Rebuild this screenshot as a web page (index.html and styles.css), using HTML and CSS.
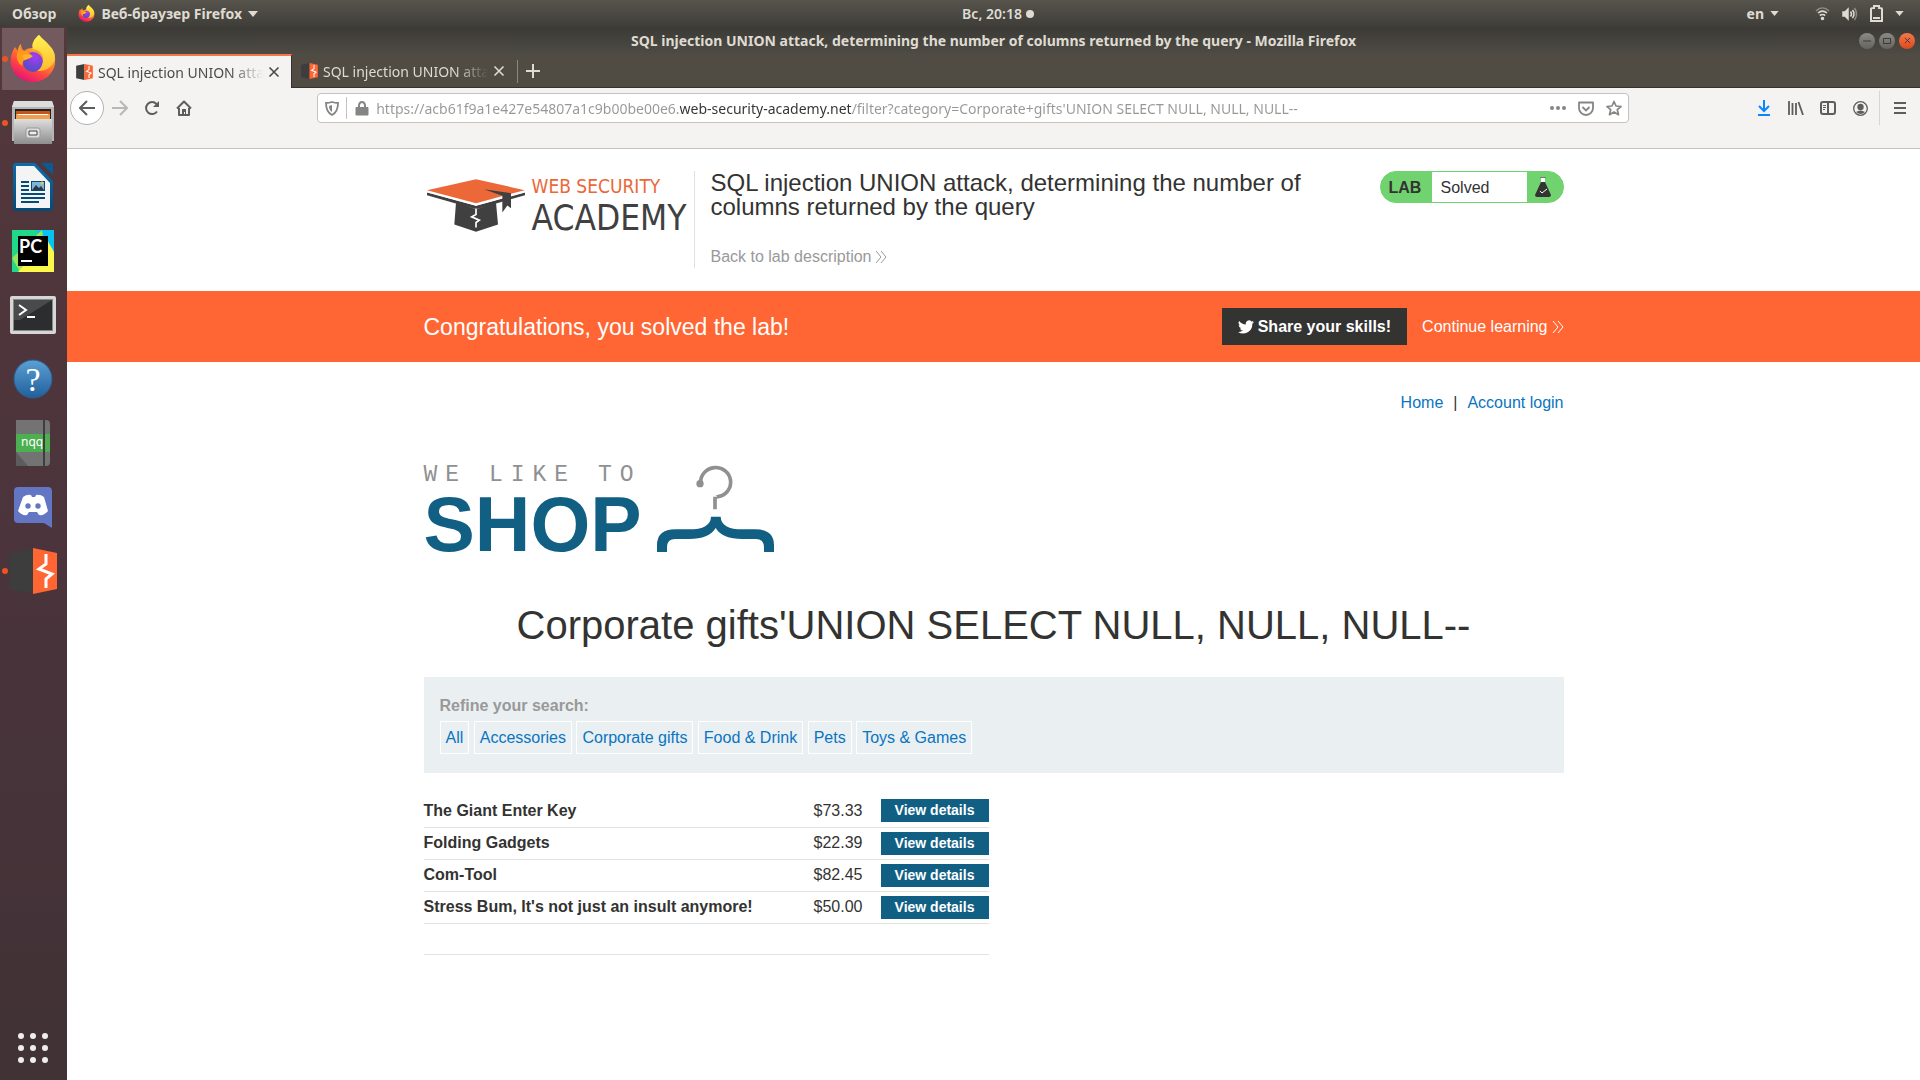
FILE: index.html
```html
<!DOCTYPE html>
<html lang="en">
<head>
<meta charset="utf-8">
<title>SQL injection UNION attack, determining the number of columns returned by the query</title>
<link rel="stylesheet" href="styles.css">
</head>
<body>
<svg class="defs" aria-hidden="true">
  <defs>
    <linearGradient id="fire" x1="0.8" y1="0" x2="0.3" y2="1"><stop offset="0" stop-color="#fff44f"/><stop offset=".35" stop-color="#ffa42b"/><stop offset=".7" stop-color="#ff4a3e"/><stop offset="1" stop-color="#e4107c"/></linearGradient>
    <radialGradient id="globe" cx=".6" cy=".25" r=".8"><stop offset="0" stop-color="#a63bf0"/><stop offset="1" stop-color="#4a4fc4"/></radialGradient>
    <linearGradient id="tail" x1=".5" y1="0" x2=".5" y2="1"><stop offset="0" stop-color="#fff44f"/><stop offset="1" stop-color="#ffb930"/></linearGradient>
    <linearGradient id="steel" x1="0" y1="0" x2="0" y2="1"><stop offset="0" stop-color="#dedede"/><stop offset="1" stop-color="#8e8e8e"/></linearGradient>
    <linearGradient id="blue" x1="0" y1="0" x2="0" y2="1"><stop offset="0" stop-color="#5ba0d4"/><stop offset="1" stop-color="#215f9c"/></linearGradient>
    <linearGradient id="writer" x1="0" y1="0" x2="0" y2="1"><stop offset="0" stop-color="#0b6cab"/><stop offset="1" stop-color="#064a78"/></linearGradient>
    <symbol id="firefox" viewBox="0 0 46 48">
      <path d="M11 9c-2 2-3 4-3 7l-3-4C1 18 0 24 1 30c2 10 11 17 22 17s21-8 22-19c1-8-2-14-6-17-3-4-7-7-10-11-5 4-7 9-6 13-4 0-7 1-9 3-2-2-3-4-3-7z" fill="url(#fire)"/>
      <circle cx="23" cy="27" r="10" fill="url(#globe)"/>
      <path d="M29 0c-5 4-8 9-6 14 9 1 12 8 9 16-1 3-3 5-5 6 10 1 17-6 18-13 0-6-3-10-6-13-3-4-7-6-10-10z" fill="url(#tail)"/>
      <path d="M11 9c-1 3-1 5 0 7 4-1 8 1 11 5-1 3-5 3-7 4-3 1-2 4-3 6-4-3-7-8-4-15 0-3 1-5 3-7z" fill="#ff9a1f"/>
      <path d="M12 21c3-2 7-2 11 0-2 2-6 2-8 4z" fill="#ffb52b"/>
    </symbol>
    <symbol id="burp" viewBox="0 0 48 46">
      <path d="M0 5 24 0v46L0 41z" fill="#3d3d3d"/><path d="M24 0 48 5v36L24 46z" fill="#ff6633"/>
      <path d="M37 6v10l-7 5 13 5-6 5v9" fill="none" stroke="#fff" stroke-width="3"/>
    </symbol>
    <symbol id="chevrons" viewBox="0 0 12 14"><path d="M1 1l5 6-5 6M6 1l5 6-5 6" fill="none" stroke="currentColor"/></symbol>
    <symbol id="cross" viewBox="0 0 12 12"><path d="M1.500 1.500l9 9m0-9-9 9" stroke="currentColor" stroke-width="1.600"/></symbol>
    <symbol id="caret" viewBox="0 0 10 6"><path d="M0 0h10L5 6z" fill="currentColor"/></symbol>
  </defs>
</svg>

<header class="topbar">
  <div class="topbar-side">
    <button class="top-item">Обзор</button>
    <button class="top-item"><svg width="17" height="17"><use href="#firefox"/></svg>Веб-браузер Firefox<svg width="10" height="6"><use href="#caret"/></svg></button>
  </div>
  <button class="top-item clock">Вс, 20:18<span class="dot"></span></button>
  <div class="topbar-side topbar-right">
    <button class="top-item lang">en<svg width="9" height="5"><use href="#caret"/></svg></button>
    <button class="top-item status" aria-label="System menu">
      <svg width="15" height="15" viewBox="0 0 15 15" fill="none" stroke="currentColor" stroke-width="1.600"><path d="M1 5c4-4 9-4 13 0" opacity=".45"/><path d="M3 7c3-2.500 6-2.500 9 0M4.800 9.500c2-1.500 3.400-1.500 5.400 0"/><circle cx="7.500" cy="12.500" r="1" fill="currentColor"/></svg>
      <svg width="16" height="14" viewBox="0 0 16 14" fill="none" stroke="currentColor" stroke-width="1.500"><path d="M1 5h2l3-3v10L3 9H1z" fill="currentColor"/><path d="M8.500 4.500q2 2.500 0 5M10.500 3q3 4 0 8"/><path d="M12.500 1q4 6 0 12" opacity=".45"/></svg>
      <svg width="13" height="17" viewBox="0 0 13 17" fill="none" stroke="currentColor" stroke-width="2"><path d="M1 4q0-1 2-1h1V1h5v2h1q2 0 2 1v12H1zM3 13h7"/></svg>
      <svg width="9" height="5"><use href="#caret"/></svg>
    </button>
  </div>
</header>

<div class="desktop">
  <nav class="dock" aria-label="Applications">
    <button class="app active running" aria-label="Firefox"><svg width="46" height="48"><use href="#firefox"/></svg></button>
    <button class="app running" aria-label="Files"><svg width="42" height="44" viewBox="0 0 42 44"><path d="M2 0h38l2 6v34H0V6z" fill="#b5b5b5"/><path d="M2 0h38l2 6H0z" fill="#dcdcdc"/><path d="M3 8h36v14H3z" fill="#222"/><path d="M4 10h34v7H4z" fill="#c4541d"/><path d="M4 13h34v7H4z" fill="#f0a04a"/><path d="M6 13h30v1H6z" fill="#fff"/><path d="M2 18h38v25H2z" fill="url(#steel)"/><rect x="14" y="27" width="14" height="10" rx="2" fill="#ddd" stroke="#999"/><path d="M17 30h8v4h-8z" fill="#eee" stroke="#444"/></svg></button>
    <button class="app" aria-label="LibreOffice Writer"><svg width="40" height="48" viewBox="0 0 40 48"><path d="M2 0h20l18 18v28l-2 2H2l-2-2V2z" fill="url(#writer)"/><path d="M28 0h12v12z" fill="#0b5a93"/><path d="M3 3h18l16 17v25H3z" fill="#f4f4f4"/><path d="M8 19h8m-8 4h8m-8 4h8m-8 4h24M8 35h24M8 39h18" stroke="#064a78" stroke-width="2"/><path d="M18 18h14v10H18z" fill="#064a78"/><path d="M19 19h12v8H19z" fill="#7cb5dc"/><path d="m19 27 4-5 3 3 2-2 3 4z" fill="#2d3840"/><circle cx="29" cy="20" r="1.500" fill="#e9c84a"/></svg></button>
    <button class="app" aria-label="PyCharm"><svg width="42" height="42" viewBox="0 0 42 42"><path d="M0 0h42v42H0z" fill="#21d789"/><path d="M24 0h18v26z" fill="#07c3f2"/><path d="M0 28 30 0l6 42H8z" fill="#9be25d"/><path d="m34 8 8 14v20H6z" fill="#fcf84a"/><path d="M6 6h30v30H6z" fill="#000"/><path d="M9 31h11" stroke="#fff" stroke-width="2"/><text x="7" y="23" class="pc">PC</text></svg></button>
    <button class="app" aria-label="Terminal"><svg width="46" height="38" viewBox="0 0 46 38"><rect width="46" height="38" rx="2" fill="#d6d6d6"/><path d="M3 3h40v32H3z" fill="#888"/><path d="M4 4h38v30H4z" fill="#2b2d2f"/><path d="M4 4h38L10 24H4z" fill="#484a4c"/><path d="m9 9 7 5-7 5M17 21h8" fill="none" stroke="#fff" stroke-width="2"/></svg></button>
    <button class="app" aria-label="Help"><svg width="40" height="40" viewBox="0 0 40 40"><circle cx="20" cy="20" r="19" fill="url(#blue)" stroke="#2a5f93"/><text x="20" y="32" text-anchor="middle" class="help">?</text></svg></button>
    <button class="app" aria-label="NotepadQQ"><svg width="34" height="46" viewBox="0 0 34 46"><path d="M0 0h30q4 0 4 4v38q0 4-4 4H0z" fill="#737373"/><path d="m0 32 12 14H0z" fill="#5c5c5c"/><path d="M0 14h34v18H0z" fill="#4caf50"/><path d="M28 0v46" stroke="#3e3e3e" stroke-width="2"/><text x="5" y="26" class="nqq">nqq</text></svg></button>
    <button class="app" aria-label="Discord"><svg width="38" height="41" viewBox="0 0 38 41"><path d="M4 0h30q4 0 4 4v37l-8-5H4q-4 0-4-4V4q0-4 4-4z" fill="#6276c4"/><path d="M4 24 9 10q4-3 8-2l1 2h3l1-2q4-1 8 2l4 14q-4 5-9 4l-2-3h-8l-2 3q-5 1-9-4z" fill="#fff"/><circle cx="14" cy="19" r="2.700" fill="#6276c4"/><circle cx="24" cy="19" r="2.700" fill="#6276c4"/></svg></button>
    <button class="app running" aria-label="Burp Suite"><svg width="48" height="46"><use href="#burp"/></svg></button>
    <button class="app show-apps" aria-label="Show applications"><svg width="32" height="32" viewBox="0 0 32 32" fill="#eee"><circle cx="4" cy="4" r="3"/><circle cx="16" cy="4" r="3"/><circle cx="28" cy="4" r="3"/><circle cx="4" cy="16" r="3"/><circle cx="16" cy="16" r="3"/><circle cx="28" cy="16" r="3"/><circle cx="4" cy="28" r="3"/><circle cx="16" cy="28" r="3"/><circle cx="28" cy="28" r="3"/></svg></button>
  </nav>

  <div class="window">
    <div class="titlebar">
      <span class="window-title">SQL injection UNION attack, determining the number of columns returned by the query - Mozilla Firefox</span>
      <div class="window-controls">
        <button class="control" aria-label="Minimize"><svg width="8" height="8" viewBox="0 0 8 8"><path d="M0 4h8" stroke="currentColor"/></svg></button>
        <button class="control" aria-label="Maximize"><svg width="8" height="8" viewBox="0 0 8 8"><path d="M.500 1.500h7v5h-7z" fill="none" stroke="currentColor"/></svg></button>
        <button class="control close" aria-label="Close"><svg width="7" height="7"><use href="#cross"/></svg></button>
      </div>
    </div>

    <div class="tabs">
      <div class="tab selected"><svg width="17" height="16"><use href="#burp"/></svg><span class="tab-label">SQL injection UNION attack</span><button class="tab-close" aria-label="Close tab"><svg width="12" height="12"><use href="#cross"/></svg></button></div>
      <div class="tab"><svg width="17" height="16"><use href="#burp"/></svg><span class="tab-label">SQL injection UNION attack</span><button class="tab-close" aria-label="Close tab"><svg width="12" height="12"><use href="#cross"/></svg></button></div>
      <button class="new-tab" aria-label="New tab"><svg width="14" height="14" viewBox="0 0 14 14"><path d="M7 0v14M0 7h14" stroke="currentColor" stroke-width="2"/></svg></button>
    </div>

    <div class="toolbar">
      <div class="tools tools-left">
        <button class="tool back" aria-label="Back"><svg width="16" height="16" viewBox="0 0 16 16"><path d="M16 8H1m7-7L1 8l7 7" fill="none" stroke="currentColor" stroke-width="2"/></svg></button>
        <button class="tool disabled" aria-label="Forward"><svg width="16" height="16" viewBox="0 0 16 16"><path d="M0 8h15M8 1l7 7-7 7" fill="none" stroke="currentColor" stroke-width="2"/></svg></button>
        <button class="tool" aria-label="Reload"><svg width="16" height="16" viewBox="0 0 16 16"><path d="M13 11.500a6 6 0 1 1-.5-7.500" fill="none" stroke="currentColor" stroke-width="2"/><path d="M15 1v6H9z" fill="currentColor"/></svg></button>
        <button class="tool" aria-label="Home"><svg width="16" height="16" viewBox="0 0 16 16"><path d="M1 8.500 8 1.500l7 7M3 8v7h10V8" fill="none" stroke="currentColor" stroke-width="2" stroke-linejoin="round"/><path d="M6 14V9h4v5H9v-2H8v2z" fill="currentColor"/></svg></button>
      </div>
      <div class="urlbar">
        <button class="url-btn" aria-label="Tracking protection"><svg width="14" height="15" viewBox="0 0 14 15"><path d="M7 1q3 1 6 1 0 9-6 12Q1 11 1 2q3 0 6-1z" fill="none" stroke="currentColor" stroke-width="1.800"/><path d="M7 4v7q-3-2-3-6z" fill="currentColor"/></svg></button>
        <button class="url-btn lock" aria-label="Site information"><svg width="14" height="15" viewBox="0 0 14 15"><path d="M1 6.500h12V14H1z" fill="currentColor" stroke="currentColor" stroke-linejoin="round"/><path d="M4 7V4.500a3 3.500 0 0 1 6 0V7" fill="none" stroke="currentColor" stroke-width="2"/></svg></button>
        <input class="url" type="text" aria-label="Address" value="https://acb61f9a1e427e54807a1c9b00be00e6.web-security-academy.net/filter?category=Corporate+gifts'UNION SELECT NULL, NULL, NULL--">
        <button class="url-btn" aria-label="Page actions"><svg width="16" height="4" viewBox="0 0 16 4" fill="currentColor"><circle cx="2" cy="2" r="2"/><circle cx="8" cy="2" r="2"/><circle cx="14" cy="2" r="2"/></svg></button>
        <button class="url-btn" aria-label="Save to Pocket"><svg width="16" height="15" viewBox="0 0 16 15" fill="none" stroke="currentColor" stroke-width="1.800"><path d="M1 1.500h14V7a7 7 0 0 1-14 0z" stroke-linejoin="round"/><path d="m4.500 6 3.500 3.500L11.500 6"/></svg></button>
        <button class="url-btn" aria-label="Bookmark"><svg width="16" height="16" viewBox="0 0 16 16"><path d="m8 1.500 2 4.500 5 .5-3.700 3.200 1.200 5L8 12l-4.500 2.700 1.200-5L1 6.500 6 6z" fill="none" stroke="currentColor" stroke-width="1.700" stroke-linejoin="round"/></svg></button>
      </div>
      <div class="tools tools-right">
        <button class="tool download" aria-label="Downloads"><svg width="14" height="16" viewBox="0 0 14 16"><path d="M7 0v11M2 6l5 5 5-5M1 15h12" fill="none" stroke="currentColor" stroke-width="2"/></svg></button>
        <button class="tool" aria-label="Library"><svg width="16" height="14" viewBox="0 0 16 14"><path d="M1 0v14M4.500 2v12M8 2v12M10.500 1l4.500 13" stroke="currentColor" stroke-width="1.800"/></svg></button>
        <button class="tool" aria-label="Sidebars"><svg width="16" height="14" viewBox="0 0 16 14"><rect x="1" y="1" width="14" height="12" rx="2" fill="none" stroke="currentColor" stroke-width="2"/><path d="M8 1v12" stroke="currentColor" stroke-width="2"/><path d="M3 4.500h3m-3 2h3m-3 2h2" stroke="currentColor"/></svg></button>
        <button class="tool" aria-label="Account"><svg width="15" height="15" viewBox="0 0 15 15"><circle cx="7.500" cy="7.500" r="6.800" fill="none" stroke="currentColor" stroke-width="1.300"/><circle cx="7.500" cy="6" r="3.200" fill="currentColor"/><path d="M3 11q4.500-3 9 0-4.500 4-9 0z" fill="currentColor"/></svg></button>
        <button class="tool menu" aria-label="Menu"><svg width="12" height="12" viewBox="0 0 12 12"><path d="M0 1h12M0 6h12M0 11h12" stroke="currentColor" stroke-width="2"/></svg></button>
      </div>
    </div>

    <div class="page">
      <header class="container lab-header">
        <a class="logo" href="#" aria-label="Web Security Academy">
          <svg width="98" height="53" viewBox="51 88 294 158"><path d="m138 158 60 20 60-20 6 66-66 22-65-22z" fill="#404041"/><path d="m51 127 147 41 147-41v9l-147 42L51 136z" fill="#404041"/><path d="m198 160 147-39v7l-147 40L51 128v-7z" fill="#fff"/><path d="m198 88 146 33-146 39-147-39z" fill="#ec6839"/><path d="m222 118 81 12v45l-11-8-15 21v-50z" fill="#404041"/><path d="M198 176v18l-13 7 23 10-10 7v15" fill="none" stroke="#fff" stroke-width="5"/></svg>
          <span class="logo-words"><span class="logo-small">WEB SECURITY</span><span class="logo-big">ACADEMY</span></span>
        </a>
        <div class="lab-title">
          <h2>SQL injection UNION attack, determining the number of columns returned by the query</h2>
          <a class="back-link" href="#">Back to lab description <svg width="12" height="14"><use href="#chevrons"/></svg></a>
        </div>
        <div class="lab-badge"><strong>LAB</strong><span class="lab-state">Solved</span><span class="lab-flask"><svg width="16" height="20" viewBox="0 0 16 20"><path d="M5 0h6v1H5z" fill="#777"/><path d="M6 1h4v5H6z" fill="#fff"/><path d="M6 5h4l6 13q0 2-2 2H2q-2 0-2-2z" fill="#333332"/><path d="m5 14 2 2 5-4" fill="none" stroke="#fff"/></svg></span></div>
      </header>

      <section class="banner">
        <div class="container banner-row">
          <h4>Congratulations, you solved the lab!</h4>
          <button class="share"><svg width="16" height="14" viewBox="0 0 24 20" fill="#fff"><path d="M24 2.400a10 10 0 0 1-2.800.8A5 5 0 0 0 23.300.500a10 10 0 0 1-3.100 1.200 4.900 4.900 0 0 0-8.400 4.500A14 14 0 0 1 1.700 1a4.900 4.900 0 0 0 1.500 6.600A5 5 0 0 1 1 7a4.900 4.900 0 0 0 3.900 4.900 5 5 0 0 1-2.200.1 4.900 4.900 0 0 0 4.600 3.400A10 10 0 0 1 0 17.500 14 14 0 0 0 21.500 5 10 10 0 0 0 24 2.400z"/></svg>Share your skills!</button>
          <a class="continue" href="#">Continue learning <svg width="12" height="14"><use href="#chevrons"/></svg></a>
        </div>
      </section>

      <main class="container shop">
        <nav class="shop-nav"><a href="#">Home</a><span>|</span><a href="#">Account login</a></nav>
        <div class="shop-logo">
          <div class="shop-words"><span class="we-like">WE LIKE TO</span><span class="shop-big">SHOP</span></div>
          <svg width="117" height="87" viewBox="741 75 351 261"><circle cx="870" cy="131" r="11" fill="#8f9091"/><path d="M872 128a45 44 0 1 1 52 42q-9 1-9 0v38" fill="none" stroke="#8f9091" stroke-width="11"/><path d="M741 336v-20q0-48 55-48h40q66 0 67-38h29q1 38 67 38h38q55 0 55 48v20h-30v-14q0-25-25-25h-40q-60 0-80-33-20 33-80 33h-41q-25 0-25 25v14z" fill="#125f84"/></svg>
        </div>
        <h1>Corporate gifts'UNION SELECT NULL, NULL, NULL--</h1>
        <section class="filters">
          <p>Refine your search:</p>
          <div class="filter-list">
            <a href="#">All</a>
            <a href="#">Accessories</a>
            <a href="#">Corporate gifts</a>
            <a href="#">Food &amp; Drink</a>
            <a href="#">Pets</a>
            <a href="#">Toys &amp; Games</a>
          </div>
        </section>
        <table class="products">
          <tbody>
            <tr><th scope="row">The Giant Enter Key</th><td>$73.33</td><td class="action"><a href="#">View details</a></td></tr>
            <tr><th scope="row">Folding Gadgets</th><td>$22.39</td><td class="action"><a href="#">View details</a></td></tr>
            <tr><th scope="row">Com-Tool</th><td>$82.45</td><td class="action"><a href="#">View details</a></td></tr>
            <tr><th scope="row">Stress Bum, It's not just an insult anymore!</th><td>$50.00</td><td class="action"><a href="#">View details</a></td></tr>
            <tr class="empty"><th></th><td></td><td></td></tr>
          </tbody>
        </table>
      </main>
    </div>
  </div>
</div>
</body>
</html>
```

FILE: styles.css
```css
* { box-sizing: border-box; }
body {
  margin: 0;
  min-height: 100vh;
  display: flex;
  flex-direction: column;
  font-family: "Noto Sans", "Open Sans", sans-serif;
  font-size: 14px;
  color: #333332;
}
button { border: 0; padding: 0; background: none; font: inherit; color: inherit; }
svg { display: block; flex: none; }
.defs { position: absolute; width: 0; height: 0; }

/* System panel */
.topbar {
  height: 27px;
  padding: 0 16px 0 12px;
  display: flex;
  align-items: center;
  background: linear-gradient(#57544c, #3e3d38);
  color: #dfdbd2;
}
.topbar-side { flex: 1; display: flex; gap: 22px; }
.topbar-right { justify-content: flex-end; gap: 36px; }
.top-item { display: flex; align-items: center; gap: 6px; font-weight: 700; }
.clock { gap: 4px; padding-left: 80px; font-weight: 600; }
.dot { width: 8px; height: 8px; border-radius: 50%; background: #dfdbd2; }
.status { gap: 12px; }

/* Dock */
.desktop { flex: 1; display: flex; }
.dock {
  width: 67px;
  flex: none;
  display: flex;
  flex-direction: column;
  background: linear-gradient(#53383c, #49333b 60%, #403235);
}
.app {
  position: relative;
  height: 64px;
  width: 65px;
  display: flex;
  align-items: center;
  justify-content: center;
}
.app.active { background: linear-gradient(#725a5e, #725a5e) 2px 1px / 62px 62px no-repeat; }
.app.running::before {
  content: "";
  position: absolute;
  left: 2px;
  width: 6px;
  height: 6px;
  border-radius: 50%;
  background: #e95420;
}
.show-apps { margin-top: auto; }
.pc { font: bold 18px Lato, sans-serif; fill: #fff; }
.help { font: 34px "Liberation Serif", serif; fill: #fff; }
.nqq { font: 12px "Noto Sans", sans-serif; fill: #fff; }

/* Browser window */
.window { flex: 1; min-width: 0; display: flex; flex-direction: column; }
.titlebar {
  height: 27px;
  padding: 0 5px;
  display: grid;
  grid-template-columns: 1fr auto 1fr;
  align-items: center;
  background: linear-gradient(#3b3a36, #4e4b44);
  color: #dfdbd2;
}
.window-title { grid-column: 2; font-weight: 700; }
.window-controls { display: flex; justify-content: flex-end; gap: 4px; }
.control {
  width: 16px;
  height: 16px;
  border-radius: 50%;
  display: grid;
  place-items: center;
  background: linear-gradient(#8c8a84, #65635d);
  color: #3c3b37;
}
.control.close { background: linear-gradient(#f4794e, #dc4a1c); }
.tabs {
  height: 34px;
  display: flex;
  background: #504c44;
  border-bottom: 1px solid #33322e;
  color: #dfdbd2;
}
.tab {
  width: 225px;
  height: 34px;
  padding: 0 12px 0 9px;
  display: flex;
  align-items: center;
  gap: 5px;
}
.tab.selected {
  background: #f4f3f1;
  color: #4a4a48;
  border-top: 2px solid #f4764a;
  border-right: 1px solid #33322e;
  padding-right: 11px;
}
.tab-label {
  flex: 1;
  overflow: hidden;
  white-space: nowrap;
  mask-image: linear-gradient(to right, #000 80%, transparent);
}
.new-tab { padding: 0 9px; display: flex; align-items: center; position: relative; }
.new-tab::before { content: ""; position: absolute; left: 0; top: 6px; bottom: 4px; width: 1px; background: #8a877f; }

.toolbar {
  height: 61px;
  padding: 2px 3px 0;
  display: flex;
  align-items: flex-start;
  background: #f4f3f1;
  border-bottom: 1px solid #c4c3c1;
}
.tools { height: 36px; display: flex; align-items: center; color: #5d5d5c; }
.tools-left { flex: 6 1 0; }
.tools-right { flex: 7 1 0; justify-content: flex-end; }
.tool { width: 32px; height: 34px; display: grid; place-items: center; }
.back { width: 34px; border: 1px solid #b3b2b0; border-radius: 50%; background: #fff; }
.disabled { color: #b9b8b6; }
.download { color: #0a84ff; }
.menu { width: 34px; margin: 0 4px 0 3px; padding-left: 6px; border-left: 1px solid #d6d5d3; }
.urlbar {
  width: 71%;
  height: 30px;
  margin-top: 3px;
  padding: 0 0 0 3px;
  display: flex;
  align-items: center;
  background: #fff;
  border: 1px solid #c4c3c1;
  border-radius: 4px;
  color: #858584;
}
.url-btn { width: 28px; height: 22px; display: grid; place-items: center; flex: none; }
.url-btn:first-child { width: 26px; padding-right: 4px; border-right: 1px solid #c4c3c1; }
.lock { width: 29px; }
.url {
  flex: 1;
  min-width: 0;
  height: 26px;
  border: 0;
  padding: 0;
  font: 14px "Noto Sans", "Open Sans", sans-serif;
  color: #979796;
  -webkit-text-fill-color: transparent;
  background: linear-gradient(to right, #979796 304px, #333332 304px 476px, #979796 476px);
  -webkit-background-clip: text;
  background-clip: text;
}

/* Page */
.page {
  flex: 1;
  background: #fff;
  font-family: "Liberation Sans", Arial, sans-serif;
  font-size: 16px;
  line-height: 24px;
}
.page a { text-decoration: none; color: #0975c1; }
.container { max-width: 1140px; margin: 0 auto; }
.lab-header { padding: 22px 0; display: flex; align-items: flex-start; }
.page .logo {
  height: 97px;
  width: 271px;
  padding: 3px 0 0 3px;
  display: flex;
  gap: 7px;
  border-right: 1px solid #e0e0e0;
  font-family: "DejaVu Sans Condensed", "DejaVu Sans", sans-serif;
}
.logo svg { margin-top: 5px; }
.logo-words { display: flex; flex-direction: column; white-space: nowrap; }
.logo-small { font-size: 19px; line-height: 24px; color: #ec6839; }
.logo-big { font-size: 35px; line-height: 40px; color: #404041; }
.lab-title { flex: 1; padding-left: 16px; }
.lab-title h2 { max-width: 620px; margin: 0 0 26px; font-size: 24px; line-height: 24px; font-weight: 400; }
.page .back-link { display: flex; align-items: center; gap: 4px; color: #999; }
.lab-badge {
  width: 184px;
  height: 32px;
  display: flex;
  overflow: hidden;
  border: 1px solid #70d36f;
  border-radius: 16px;
  background: #70d36f;
  line-height: 32px;
}
.lab-badge strong { width: 51px; padding-left: 8px; }
.lab-state { flex: 1; padding-left: 9px; background: #fff; }
.lab-flask { width: 36px; padding: 5px 0 0 8px; }

.banner { background: #ff6633; color: #fff; }
.banner-row { height: 71px; display: flex; align-items: center; }
.banner h4 { flex: 1; margin: 0; font-size: 23px; font-weight: 400; }
.share {
  height: 37px;
  padding: 0 16px;
  display: flex;
  align-items: center;
  gap: 4px;
  background: #333332;
  font-weight: 700;
}
.page .continue { margin-left: 15px; display: flex; align-items: center; gap: 4px; color: #fff; }

.shop { padding-top: 29px; }
.shop-nav { display: flex; justify-content: flex-end; gap: 10px; }
.shop-logo { margin-top: 50px; display: flex; gap: 15px; }
.shop-words { width: 218px; display: flex; flex-direction: column; white-space: nowrap; }
.we-like { font: 23px/21px "Liberation Mono", monospace; letter-spacing: 8px; color: #8f9091; }
.shop-big { font-size: 77px; line-height: 76px; height: 66px; font-weight: 700; color: #125f84; }
h1 { margin: 49px 0 28px; font-size: 40px; line-height: 48px; font-weight: 400; text-align: center; }
.filters { padding: 17px 16px 19px; background: #eaeff2; }
.filters p { margin: 0 0 3px; font-weight: 700; color: #999; }
.filter-list a { display: inline-block; padding: 4px 5px 3px; border: 1px solid #fff; }
.products { width: 565px; margin-top: 22px; border-collapse: collapse; }
.products tr { height: 32px; border-bottom: 1px solid #e3e3e3; }
.products .empty { height: 31px; }
.products th, .products td { padding: 0; text-align: left; }
.products td { width: 67px; }
.products .action { width: 108px; }
.page .action a {
  display: block;
  width: 108px;
  height: 23px;
  font-size: 14px;
  font-weight: 700;
  line-height: 23px;
  text-align: center;
  background: #125f84;
  color: #fff;
}
```
